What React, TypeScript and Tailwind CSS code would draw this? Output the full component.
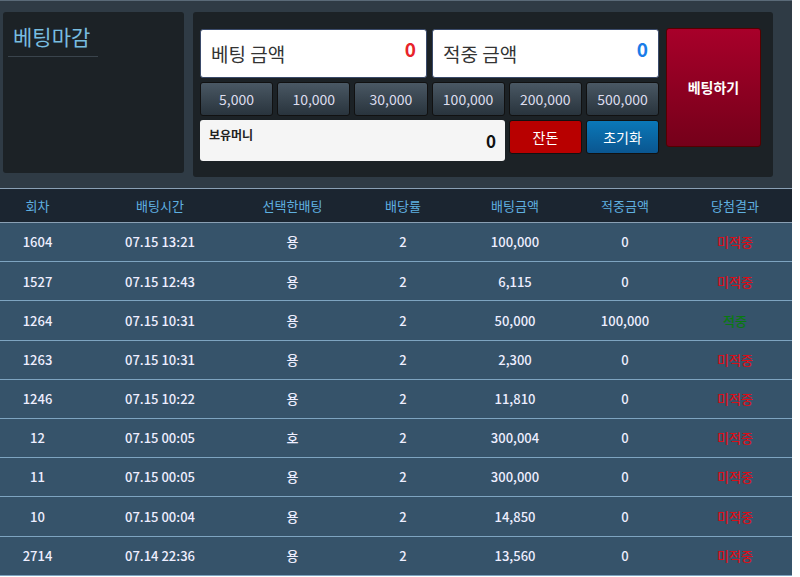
import React from "react";

const rows = [
  ["1604","07.15 13:21","용","2","100,000","0","미적중"],
  ["1527","07.15 12:43","용","2","6,115","0","미적중"],
  ["1264","07.15 10:31","용","2","50,000","100,000","적중"],
  ["1263","07.15 10:31","용","2","2,300","0","미적중"],
  ["1246","07.15 10:22","용","2","11,810","0","미적중"],
  ["12","07.15 00:05","호","2","300,004","0","미적중"],
  ["11","07.15 00:05","용","2","300,000","0","미적중"],
  ["10","07.15 00:04","용","2","14,850","0","미적중"],
  ["2714","07.14 22:36","용","2","13,560","0","미적중"],
];
const cols = ["w-[75px]","w-[170px]","w-[95px]","w-[126px]","w-[98px]","w-[122px]","w-[98px]"];
const heads = ["회차","배팅시간","선택한배팅","배당률","배팅금액","적중금액","당첨결과"];
const amts = ["5,000","10,000","30,000","100,000","200,000","500,000"];

export default function App() {
  return (
    <div className="w-[800px] h-[577px] bg-white overflow-hidden" style={{fontFamily:'"Noto Sans CJK KR","Noto Sans",sans-serif'}}>
      <div className="w-[792px]">
        <div className="h-[189px] bg-[#2f3b45] border-t border-[#5a6a78] border-b border-b-[#8aa0b4] flex pt-[11px] pl-[3px]">
          <div className="w-[181px] h-[161px] bg-[#1c2226] rounded-[3px] px-[5px] pt-[10px]">
            <div className="text-[#78bde0] text-[21px] leading-[28px] pl-[5px] pb-[6px] border-b border-[#3a444c] w-[90px]">베팅마감</div>
          </div>
          <div className="ml-[9px] w-[580px] h-[165px] bg-[#1c2226] rounded-[3px] flex px-[7px] pt-[17px] gap-[7px]">
            <div className="w-[459px] flex flex-col gap-[4px]">
              <div className="flex gap-[5px]">
                {[["베팅 금액","text-[#e8232a]"],["적중 금액","text-[#1a7ce8]"]].map(([l,c])=>(
                  <div key={l} className="flex-1 h-[49px] bg-white rounded-[3px] border border-[#3a4a6a] flex justify-between px-[10px] pt-[4px]">
                    <span className="text-[#333] text-[19px] leading-[40px]">{l}</span>
                    <span className={`${c} text-[19px] font-bold leading-[30px]`}>0</span>
                  </div>
                ))}
              </div>
              <div className="flex gap-[4px]">
                {amts.map(a=>(
                  <div key={a} className="flex-1 h-[34px] rounded-[3px] border border-[#111] bg-gradient-to-b from-[#4a5864] to-[#29343d] text-[#dde] text-[14px] flex items-center justify-center">{a}</div>
                ))}
              </div>
              <div className="flex gap-[4px]">
                <div className="w-[305px] h-[41px] bg-[#f5f5f5] rounded-[3px] flex justify-between px-[9px]">
                  <span className="text-[#222] text-[12px] font-bold pt-[6px]">보유머니</span>
                  <span className="text-[#111] text-[17px] font-bold leading-[41px]">0</span>
                </div>
                <div className="flex-1 h-[34px] rounded-[3px] border border-[#111] bg-[#b80000] text-white text-[14px] flex items-center justify-center">잔돈</div>
                <div className="flex-1 h-[34px] rounded-[3px] border border-[#111] bg-gradient-to-b from-[#0a78b8] to-[#0a5690] text-white text-[14px] flex items-center justify-center">초기화</div>
              </div>
            </div>
            <div className="w-[95px] h-[119px] -mt-[1px] rounded-[3px] border border-[#500] bg-gradient-to-b from-[#a8002a] to-[#75001a] text-white text-[14px] font-bold flex items-center justify-center">베팅하기</div>
          </div>
        </div>
        <div className="flex h-[34px] bg-[#1b2530] text-[#5fb0e0] text-[13px] items-center border-b border-[#8aa0b4]">
          {heads.map((h,i)=><div key={h} className={`${cols[i]} text-center`}>{h}</div>)}
        </div>
        {rows.map((r,ri)=>(
          <div key={ri} className="flex h-[39.2px] bg-[#36536a] text-[#eef] text-[13px] font-medium items-center border-b border-[#7ea4c0]">
            {r.map((c,i)=>(
              <div key={i} className={`${cols[i]} text-center ${i===6?(c==="적중"?"text-[#0a7a10]":"text-[#d8101a]"):""}`}>{c}</div>
            ))}
          </div>
        ))}
      </div>
    </div>
  );
}
